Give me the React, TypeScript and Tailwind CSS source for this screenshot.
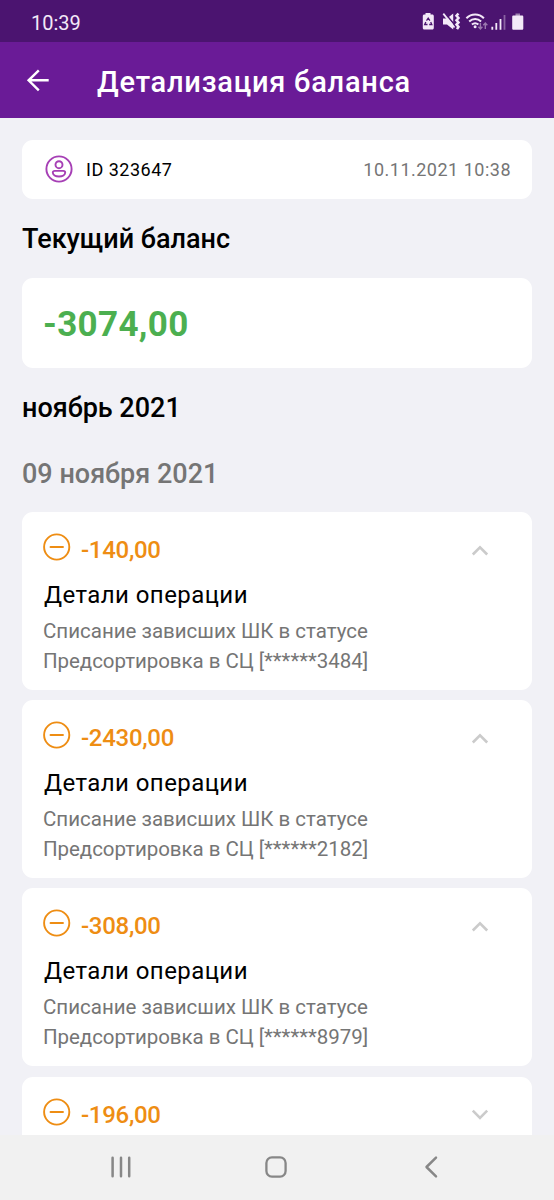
type Operation = { amount: string; code?: string };

const operations: Operation[] = [
  { amount: '-140,00', code: '3484' },
  { amount: '-2430,00', code: '2182' },
  { amount: '-308,00', code: '8979' },
  { amount: '-196,00' },
];

function StatusIcons() {
  return (
    <svg width="104" height="24" viewBox="0 0 104 24" fill="none">
      <path d="M4.500 2h5v1.500h1.800c.9 0 1.500.6 1.500 1.500v12c0 .9-.6 1.500-1.500 1.500H3.300c-.9 0-1.500-.6-1.500-1.500V5c0-.9.6-1.500 1.500-1.500h1.200z" fill="#f3e9f8" />
      <path d="M5.500 9.600 7.200 7.200l1.700 2.400M9.700 11.100l1.100 2.400H8.200M6.500 13.500H3.700l1.100-2.400" stroke="#4b1470" strokeWidth="1.300" />
      <path d="M22 7.500h4L32.200 2.500v16L26 13.500h-4z" fill="#f3e9f8" />
      <path d="M23.800 2 34.500 15" stroke="#4b1470" strokeWidth="1.600" />
      <path d="M22.300 2.600 33.500 16.500" stroke="#f3e9f8" strokeWidth="1.800" />
      <path d="m37.400 2.500-1.900 2.300 2 2.200-2 2.200 2 2.200-2 2.200 2 2.200-1.500 2.300" stroke="#f3e9f8" strokeWidth="2.500" />
      <path d="M45.400 7.200c5-5 12.500-5 17.500 0M48.200 10.500c3.500-3.300 8.400-3.300 11.900 0M50.900 13.600c2-1.700 4.500-1.700 6.500 0" stroke="#f3e9f8" strokeWidth="2" />
      <circle cx="54.100" cy="15.800" r="1.500" fill="#f3e9f8" />
      <path d="M59.400 12v6M57.400 15.800l2 2.200 2-2.200M64.300 18v-6M62.300 14.200l2-2.200 2 2.200" stroke="#9a78ae" strokeWidth="1.400" />
      <path d="M71.300 15.700v3.100M75.300 12v6.800M79.500 8v10.800" stroke="#f3e9f8" strokeWidth="1.800" />
      <path d="M83.500 4v14.800" stroke="#8a62a2" strokeWidth="1.800" />
      <path d="M94.500 2.500h4.500V5h-4.500z" fill="#9d80ae" />
      <path d="M91.200 5.700c0-.8.500-1.300 1.300-1.300h8.500c.8 0 1.300.5 1.300 1.300v11.800c0 .8-.5 1.300-1.300 1.300h-8.500c-.8 0-1.300-.5-1.300-1.300z" fill="#f3e9f8" />
    </svg>
  );
}

function MinusIcon() {
  return (
    <svg className="mt-[21px] shrink-0" width="28" height="28" viewBox="0 0 28 28" fill="none" stroke="#ee8d13" strokeWidth="1.900" strokeLinecap="round">
      <circle cx="13.700" cy="14" r="12.600" />
      <path d="M7.500 14h12.500" />
    </svg>
  );
}

function Chevron({ up }: { up: boolean }) {
  return (
    <svg className="mt-[32px] ml-auto shrink-0" width="18" height="14" viewBox="0 0 18 14" fill="none" stroke="#cbcbcb" strokeWidth="2.600">
      <path d={up ? 'M1.800 10.500 9 3.300l7.200 7.200' : 'M1.800 1.700 9 8.900l7.200-7.200'} />
    </svg>
  );
}

function OperationCard({ amount, code }: Operation) {
  return (
    <article className="h-[178px] w-full shrink-0 rounded-[11px] bg-white pr-[43px] pl-[21px]">
      <div className="flex h-[68px]">
        <MinusIcon />
        <div className="mt-[23px] ml-[10px] text-[24px] leading-[30px] font-medium tracking-[-0.300px] text-[#ee8d13]">{amount}</div>
        <Chevron up={Boolean(code)} />
      </div>
      {code && (
        <>
          <h3 className="h-[36px] pl-px text-[24px] leading-[30px] tracking-[0.430px] text-black">Детали операции</h3>
          <p className="text-[20.500px] leading-[30px] whitespace-nowrap text-[#757575]">
            Списание зависших ШК в статусе
            <br />
            <span className="tracking-[-0.050px]">Предсортировка в СЦ [******{code}]</span>
          </p>
        </>
      )}
    </article>
  );
}

export default function App() {
  return (
    <div className="flex h-[1200px] w-[554px] flex-col overflow-hidden bg-[#f1f1f6] font-['Roboto',sans-serif]">
      <div className="flex h-[42px] shrink-0 items-center bg-[#4b1470] pl-[31px]">
        <span className="mt-[3px] text-[20px] leading-[24px] text-[#f3e9f8]">10:39</span>
        <div className="mt-[4px] mr-[29px] ml-auto">
          <StatusIcons />
        </div>
      </div>
      <header className="flex h-[76px] shrink-0 items-center bg-[#6a1b97] pl-[26px]">
        <svg width="24" height="24" viewBox="0 0 24 24" fill="none" stroke="#fff" strokeWidth="2.400">
          <path d="M22.700 12.300H2.500M12.800 2.300 2.600 12.300l10.200 10" />
        </svg>
        <h1 className="mt-[3px] ml-[47px] text-[29px] leading-[36px] font-medium tracking-[0.770px] whitespace-nowrap text-white">Детализация баланса</h1>
      </header>

      <main className="flex min-h-0 flex-1 flex-col overflow-hidden px-[22px] pt-[21.500px]">
        <section className="flex h-[59px] shrink-0 items-center rounded-[11px] bg-white pr-[21px] pl-[23px]">
          <svg width="28" height="28" viewBox="0 0 28 28" fill="none" stroke="#a63fb5" strokeWidth="1.900">
            <circle cx="14" cy="14" r="12.600" />
            <circle cx="14" cy="9.700" r="3.500" />
            <path d="M9.700 15.900h8.600c1.200 0 1.900.7 1.900 1.700 0 2.200-2.600 3.900-6.200 3.900s-6.200-1.700-6.200-3.900c0-1 .7-1.700 1.900-1.700z" />
          </svg>
          <span className="ml-[13px] text-[18px] tracking-[0.500px] text-black">ID 323647</span>
          <time className="ml-auto text-[18px] tracking-[0.500px] text-[#757575]">10.11.2021 10:38</time>
        </section>
        <h2 className="mt-[24.500px] h-[32px] shrink-0 text-[27px] leading-[32px] font-medium text-black">Текущий баланс</h2>
        <section className="mt-[22.500px] flex h-[90px] shrink-0 items-center rounded-[11px] bg-white pl-[21px]">
          <span className="mt-[5px] text-[35px] leading-[40px] font-bold tracking-[0.350px] text-[#4caf50]">-3074,00</span>
        </section>
        <h2 className="mt-[24.500px] h-[32px] shrink-0 text-[27px] leading-[32px] font-medium text-black">ноябрь 2021</h2>
        <h2 className="mt-[34px] h-[32px] shrink-0 text-[27px] leading-[32px] font-medium text-[#757575]">09 ноября 2021</h2>
        <div className="mt-[22px] flex shrink-0 flex-col gap-[10.200px]">
          {operations.map((operation) => (
            <OperationCard key={operation.amount} {...operation} />
          ))}
        </div>
      </main>

      <nav className="flex h-[65px] shrink-0 items-start bg-[#f1f1f1] pt-[20px] pl-[109px]">
        <svg width="24" height="24" viewBox="0 0 24 24" fill="none" stroke="#878787" strokeWidth="2.500" strokeLinecap="round">
          <path d="M3.600 2.700v18.500M12 2.700v18.500M20.200 2.700v18.500" />
        </svg>
        <svg className="ml-[131px]" width="24" height="24" viewBox="0 0 24 24" fill="none" stroke="#878787" strokeWidth="2.300">
          <rect x="2.400" y="2.400" width="19.200" height="19.200" rx="5.500" />
        </svg>
        <svg className="ml-[131px]" width="24" height="24" viewBox="0 0 24 24" fill="none" stroke="#878787" strokeWidth="2.500" strokeLinecap="round" strokeLinejoin="round">
          <path d="M17 2.700 7.500 12l9.500 9.300" />
        </svg>
      </nav>
    </div>
  );
}
